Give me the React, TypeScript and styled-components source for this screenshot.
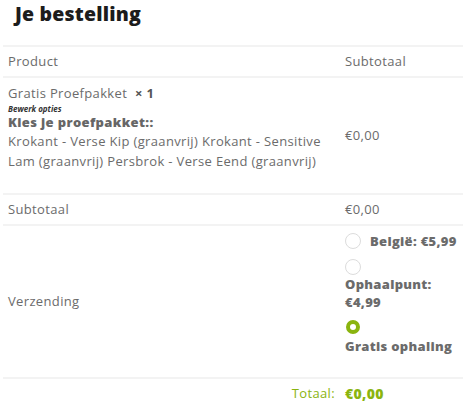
import React from "react";
import styled, { createGlobalStyle } from "styled-components";

const Global = createGlobalStyle`
  html, body { margin: 0; padding: 0; background: #fff; }
  body { font-family: "Open Sans", "Liberation Sans", sans-serif; color: #6b6b6b; }
`;

const Wrap = styled.div`
  width: 475px;
  padding: 0 0 0 3px;
  box-sizing: border-box;
`;

const Title = styled.h3`
  margin: 0;
  padding: 2px 0 0 12px;
  height: 45px;
  box-sizing: border-box;
  font-family: "Open Sans", sans-serif;
  font-size: 19.5px;
  font-weight: 800;
  letter-spacing: 0.2px;
  color: #1c1c1c;
  line-height: 24px;
`;

const Table = styled.table`
  width: 460px;
  border-collapse: collapse;
  font-size: 13px;
  line-height: 19.5px;
  letter-spacing: 0.35px;
  color: #6b6b6b;
`;

const Row = styled.tr<{ $h?: number }>`
  border-top: 2px solid #f3f3f3;
  height: ${(p) => p.$h ?? 31}px;
`;

const Cell = styled.td<{ $right?: boolean }>`
  padding: 0 5px;
  width: ${(p) => (p.$right ? "113px" : "auto")};
  vertical-align: middle;
  text-align: left;
`;

const ProductBlock = styled.div`
  padding: 6px 0 22px;
`;

const Qty = styled.strong`
  font-weight: 700;
  color: #555;
  margin-left: 4px;
`;

const Edit = styled.div`
  font-size: 8px;
  line-height: 9px;
  font-weight: 700;
  font-style: italic;
  letter-spacing: 0;
  color: #333;
`;

const OptLabel = styled.div`
  font-weight: 800;
  color: #666;
`;

const Ship = styled.ul`
  list-style: none;
  margin: 0;
  padding: 6px 0 22px;
`;

const ShipItem = styled.li<{ $inline?: boolean }>`
  display: ${(p) => (p.$inline ? "flex" : "block")};
  align-items: center;
  gap: 9px;
  margin-bottom: 9px;
  font-weight: 800;
  color: #6b6b6b;
  line-height: 18px;
  letter-spacing: 0.3px;
  &:last-child { margin-bottom: 0; }
`;

const Radio = styled.span<{ $on?: boolean }>`
  display: block;
  box-sizing: border-box;
  width: ${(p) => (p.$on ? 14 : 16)}px;
  height: ${(p) => (p.$on ? 14 : 16)}px;
  margin: ${(p) => (p.$on ? "0 0 3px 1px" : "0")};
  border-radius: 50%;
  border: ${(p) => (p.$on ? "4px solid #8ab40f" : "1px solid #dcdcdc")};
  background: #fff;
`;

const RadioBlock = styled.div`
  margin-bottom: 0;
`;

const TotalRow = styled.tr`
  border-top: 2px solid #f3f3f3;
  height: 31px;
`;

const TotalLabel = styled.td`
  text-align: right;
  padding: 0 5px;
  color: #8ab40f;
`;

const TotalValue = styled.td`
  padding: 0 5px;
  color: #8ab40f;
  font-weight: 800;
  font-size: 14px;
`;

export default function App() {
  return (
    <>
      <Global />
      <Wrap>
        <Title>Je bestelling</Title>
        <Table>
          <tbody>
            <Row>
              <Cell>Product</Cell>
              <Cell $right>Subtotaal</Cell>
            </Row>
            <Row>
              <Cell>
                <ProductBlock>
                  Gratis Proefpakket <Qty>× 1</Qty>
                  <Edit>Bewerk opties</Edit>
                  <OptLabel>Kies je proefpakket::</OptLabel>
                  <div>
                    Krokant - Verse Kip (graanvrij) Krokant - Sensitive Lam (graanvrij) Persbrok - Verse Eend (graanvrij)
                  </div>
                </ProductBlock>
              </Cell>
              <Cell $right>€0,00</Cell>
            </Row>
            <Row>
              <Cell>Subtotaal</Cell>
              <Cell $right>€0,00</Cell>
            </Row>
            <Row>
              <Cell>Verzending</Cell>
              <Cell $right>
                <Ship>
                  <ShipItem $inline>
                    <Radio />
                    België: €5,99
                  </ShipItem>
                  <ShipItem>
                    <RadioBlock>
                      <Radio />
                    </RadioBlock>
                    Ophaalpunt:
                    <br />
                    €4,99
                  </ShipItem>
                  <ShipItem>
                    <Radio $on />
                    Gratis ophaling
                  </ShipItem>
                </Ship>
              </Cell>
            </Row>
            <TotalRow>
              <TotalLabel>Totaal:</TotalLabel>
              <TotalValue>€0,00</TotalValue>
            </TotalRow>
          </tbody>
        </Table>
      </Wrap>
    </>
  );
}
